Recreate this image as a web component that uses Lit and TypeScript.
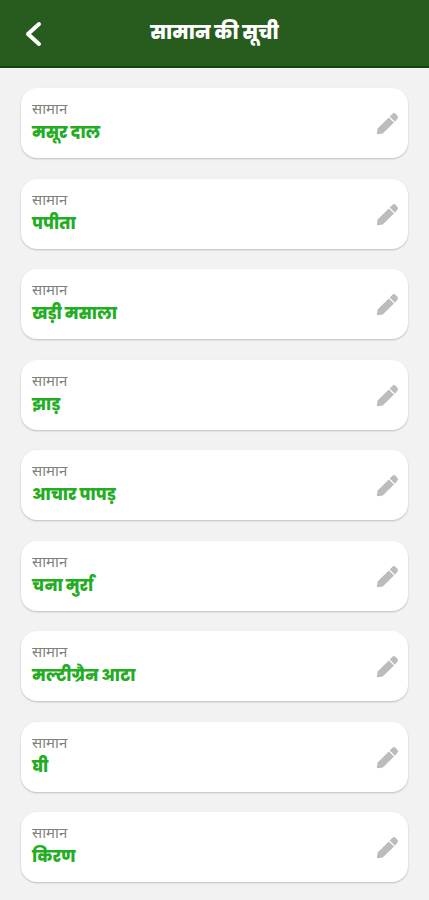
import { LitElement, html, css } from "lit";
import { customElement, property } from "lit/decorators.js";

@customElement("item-card")
class ItemCard extends LitElement {
  @property() name = "";

  static styles = css`
    :host {
      display: flex;
      align-items: center;
      justify-content: space-between;
      box-sizing: border-box;
      min-height: 70px;
      padding: 0 8px 0 11px;
      border-radius: 16px;
      background: #fff;
      box-shadow: 0 1px 2px rgba(0, 0, 0, 0.22);
    }
    .text {
      display: flex;
      flex-direction: column;
    }
    .label {
      font-family: "Noto Sans Devanagari", "Noto Sans", sans-serif;
      font-size: 15px;
      line-height: 20px;
      color: #808080;
    }
    .name {
      margin: 0;
      font-size: 16px;
      font-weight: 800;
      line-height: 24px;
      color: #23ad23;
    }
    .edit {
      display: flex;
      padding: 0;
      border: 0;
      background: none;
      cursor: pointer;
    }
    .edit svg {
      width: 26px;
      height: 26px;
      fill: #bcbcbc;
    }
  `;

  render() {
    return html`
      <div class="text">
        <span class="label">सामान</span>
        <h2 class="name">${this.name}</h2>
      </div>
      <button class="edit" aria-label="बदलें">
        <svg viewBox="0 0 26 26" aria-hidden="true">
          <path d="M3.6 24.2Q2.8 24.2 2.9 23.4L3.6 18.6L14.8 7.4L20 12.6L8.8 23.6ZM15.7 6.5L18.5 3.8Q20 2.4 21.5 3.8L23.4 5.7Q24.8 7.2 23.4 8.7L20.9 11.7Z" />
        </svg>
      </button>
    `;
  }
}

@customElement("app-root")
class AppRoot extends LitElement {
  private items = [
    "मसूर दाल",
    "पपीता",
    "खड़ी मसाला",
    "झाड़",
    "आचार पापड़",
    "चना मुर्रा",
    "मल्टीग्रैन आटा",
    "घी",
    "किरण",
  ];

  static styles = css`
    :host {
      display: flex;
      flex-direction: column;
      min-height: 100vh;
      background: #f2f2f2;
      font-family: Poppins, "Noto Sans Devanagari", "Noto Sans", sans-serif;
    }
    .bar {
      display: grid;
      grid-template-columns: 48px 1fr 48px;
      align-items: center;
      box-sizing: border-box;
      height: 68px;
      padding: 0 10px;
      background: #285c1e;
      border-bottom: 2px solid #0b4a08;
    }
    .back {
      display: flex;
      justify-content: center;
      padding: 0;
      border: 0;
      background: none;
      cursor: pointer;
    }
    .back svg {
      width: 28px;
      height: 28px;
      fill: none;
      stroke: #fff;
      stroke-width: 4;
      stroke-linecap: round;
      stroke-linejoin: round;
    }
    .title {
      margin: 0;
      text-align: center;
      font-size: 19px;
      font-weight: 800;
      line-height: 28px;
      color: #fff;
    }
    .list {
      flex: 1;
      display: flex;
      flex-direction: column;
      justify-content: space-between;
      gap: 20px;
      margin: 0;
      padding: 20px 21px 18px;
      list-style: none;
    }
  `;

  render() {
    return html`
      <header class="bar">
        <button class="back" aria-label="वापस">
          <svg viewBox="0 0 28 28" aria-hidden="true">
            <path d="M19 5L8 15L19 25" />
          </svg>
        </button>
        <h1 class="title">सामान की सूची</h1>
      </header>
      <ul class="list">
        ${this.items.map((n) => html`<li><item-card .name=${n}></item-card></li>`)}
      </ul>
    `;
  }
}
